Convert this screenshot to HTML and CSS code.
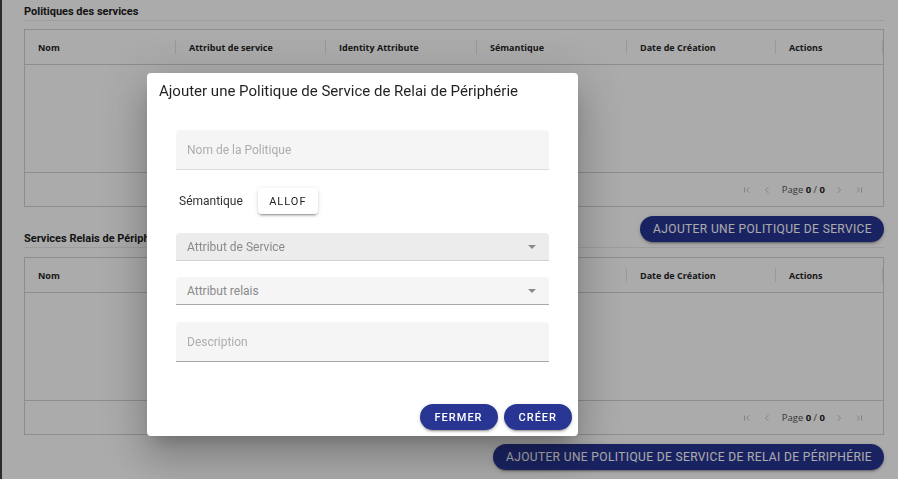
FILE: index.html
```html
<!DOCTYPE html>
<html lang="fr">
<head>
<meta charset="utf-8">
<title>Politiques des services</title>
<link rel="stylesheet" href="styles.css">
</head>
<body>
<div class="layout">
  <aside class="rail"></aside>
  <main class="content">
    <div class="section-head">
      <h2 class="section-title">Politiques des services</h2>
    </div>
    <div class="data-table">
      <div class="thead">
        <div class="th">Nom</div>
        <div class="th">Attribut de service</div>
        <div class="th">Identity Attribute</div>
        <div class="th">Sémantique</div>
        <div class="th">Date de Création</div>
        <div class="th">Actions</div>
      </div>
      <div class="tbody"></div>
      <div class="tfoot">
        <div class="pager">
          <svg class="pg-icon" width="10" height="10" viewBox="0 0 10 10"><path d="M2.5 2.5v5M7 2.5 4.5 5 7 7.5"/></svg>
          <svg class="pg-icon" width="10" height="10" viewBox="0 0 10 10"><path d="M6.5 2 3.5 5l3 3"/></svg>
          <span class="pg-text">Page <b>0</b> / <b>0</b></span>
          <svg class="pg-icon" width="10" height="10" viewBox="0 0 10 10"><path d="M3.5 2 6.5 5l-3 3"/></svg>
          <svg class="pg-icon" width="10" height="10" viewBox="0 0 10 10"><path d="M3 2.5 5.5 5 3 7.5M7.5 2.5v5"/></svg>
        </div>
      </div>
    </div>

    <div class="section-head">
      <h2 class="section-title">Services Relais de Périphérie</h2>
      <button class="btn-primary btn-page">Ajouter une politique de service</button>
    </div>
    <div class="data-table second">
      <div class="thead">
        <div class="th">Nom</div>
        <div class="th">Attribut de service</div>
        <div class="th">Attribut relais</div>
        <div class="th">Sémantique</div>
        <div class="th">Date de Création</div>
        <div class="th">Actions</div>
      </div>
      <div class="tbody"></div>
      <div class="tfoot">
        <div class="pager">
          <svg class="pg-icon" width="10" height="10" viewBox="0 0 10 10"><path d="M2.5 2.5v5M7 2.5 4.5 5 7 7.5"/></svg>
          <svg class="pg-icon" width="10" height="10" viewBox="0 0 10 10"><path d="M6.5 2 3.5 5l3 3"/></svg>
          <span class="pg-text">Page <b>0</b> / <b>0</b></span>
          <svg class="pg-icon" width="10" height="10" viewBox="0 0 10 10"><path d="M3.5 2 6.5 5l-3 3"/></svg>
          <svg class="pg-icon" width="10" height="10" viewBox="0 0 10 10"><path d="M3 2.5 5.5 5 3 7.5M7.5 2.5v5"/></svg>
        </div>
      </div>
    </div>
    <div class="page-actions">
      <button class="btn-primary btn-page">Ajouter une politique de service de relai de périphérie</button>
    </div>
  </main>
</div>

<div class="backdrop"></div>
<div class="dialog" role="dialog">
  <h1 class="dialog-title">Ajouter une Politique de Service de Relai de Périphérie</h1>
  <div class="form">
    <div class="field field-tall"><span class="ph">Nom de la Politique</span></div>
    <div class="semantic-row">
      <span class="semantic-label">Sémantique</span>
      <button class="btn-toggle">ALLOF</button>
    </div>
    <div class="field field-select field-hover"><span class="ph ph-dark">Attribut de Service</span>
      <svg class="caret" width="8" height="4" viewBox="0 0 8 4"><path d="M0 0h8L4 4z"/></svg>
    </div>
    <div class="field field-select field-strong"><span class="ph ph-dark">Attribut relais</span>
      <svg class="caret" width="8" height="4" viewBox="0 0 8 4"><path d="M0 0h8L4 4z"/></svg>
    </div>
    <div class="field field-tall field-strong"><span class="ph">Description</span></div>
  </div>
  <div class="dialog-actions">
    <button class="btn-primary btn-dialog">Fermer</button>
    <button class="btn-primary btn-dialog">Créer</button>
  </div>
</div>
</body>
</html>
```

FILE: styles.css
```css
* { box-sizing: border-box; }

body {
  margin: 0;
  width: 898px;
  height: 479px;
  overflow: hidden;
  background: #ffffff;
  font-family: Roboto, "Liberation Sans", sans-serif;
}

.layout {
  display: flex;
  height: 479px;
}

.rail {
  width: 2px;
  flex: none;
  background: #414141;
}

.content {
  flex: 1;
  padding: 0 14px 0 22px;
}

.section-head {
  display: flex;
  justify-content: space-between;
  align-items: flex-end;
  border-bottom: 1px solid #ebebeb;
}

.section-title {
  margin: 0;
  padding: 5px 0 1px;
  font: 700 11px/14px Roboto, "Liberation Sans", sans-serif;
  color: #1c1c1c;
}

.data-table {
  margin-top: 8px;
  border: 1px solid #d3d3d3;
}
.data-table.second { margin-top: 9px; }

.thead {
  display: grid;
  grid-template-columns: 151px 150px 151px 150px 149px 1fr;
  height: 35px;
  border-bottom: 1px solid #d3d3d3;
}

.th {
  display: flex;
  align-items: center;
  padding-left: 13px;
  font: 700 9px "Open Sans", "Liberation Sans", sans-serif;
  color: #262626;
  background: linear-gradient(#e6e6e6, #e6e6e6) right center / 1px 14px no-repeat;
}

.tbody { height: 107px; }

.tfoot {
  height: 34px;
  border-top: 1px solid #d3d3d3;
  display: flex;
  justify-content: flex-end;
  align-items: center;
  padding-right: 19px;
}

.pager {
  display: flex;
  align-items: center;
}

.pg-icon {
  fill: none;
  stroke: #c4c4c4;
  stroke-width: 1;
  margin-left: 10px;
}
.pg-icon:first-child { margin-left: 0; }

.pg-text {
  margin: 0 -1px 0 10px;
  font: 400 9.5px "Open Sans", "Liberation Sans", sans-serif;
  color: #555;
}
.pg-text b { color: #222; font-weight: 700; }

.btn-primary {
  border: none;
  background: #283593;
  color: #ffffff;
  text-transform: uppercase;
  font-family: Roboto, "Liberation Sans", sans-serif;
  font-weight: 500;
  cursor: pointer;
  box-shadow: 0 3px 1px -2px rgba(0,0,0,.2), 0 2px 2px 0 rgba(0,0,0,.14), 0 1px 5px 0 rgba(0,0,0,.12);
}

.btn-page {
  height: 26px;
  padding: 0 12px 0 13px;
  border-radius: 13px;
  font-size: 12px;
  font-weight: 400;
  letter-spacing: 0.37px;
  margin: 9px 0 5px;
}

.page-actions {
  display: flex;
  justify-content: flex-end;
  margin-top: 9px;
}
.page-actions .btn-page { margin: 0; }

.backdrop {
  position: fixed;
  inset: 0;
  background: rgba(0,0,0,.33);
}

.dialog {
  position: absolute;
  left: 147px;
  top: 73px;
  width: 431px;
  background: #ffffff;
  border-radius: 4px;
  box-shadow: 0 11px 15px -7px rgba(0,0,0,.2), 0 24px 38px 3px rgba(0,0,0,.14), 0 9px 46px 8px rgba(0,0,0,.12);
}

.dialog-title {
  margin: 0;
  padding: 7px 12px 0;
  font: 400 15px/22px Roboto, "Liberation Sans", sans-serif;
  color: rgba(0,0,0,.87);
}

.form {
  display: flex;
  flex-direction: column;
  margin-top: 28px;
  padding: 0 29px;
}

.field {
  display: flex;
  align-items: center;
  justify-content: space-between;
  padding: 0 13px 0 11px;
  background: #f5f5f5;
  border-bottom: 1px solid #dcdcdc;
  border-radius: 4px 4px 0 0;
}

.field-tall { height: 40px; }
.field-select { height: 28px; margin-top: 16px; }
.field-hover { background: #ececec; border-bottom-color: #d2d2d2; margin-top: 19px; }
.field-strong { border-bottom-color: #a8a8a8; }
.field-tall.field-strong { margin-top: 17px; }

.ph {
  font-size: 12px;
  color: #adadad;
}
.ph-dark { color: #8a8a8a; }

.caret { fill: #8a8a8a; }

.semantic-row {
  display: flex;
  align-items: center;
  margin-top: 18px;
  height: 26px;
}

.semantic-label {
  margin-left: 3px;
  font-size: 12px;
  color: #333;
}

.btn-toggle {
  margin-left: 15px;
  width: 60px;
  height: 26px;
  border: none;
  border-radius: 4px;
  background: #ffffff;
  font: 400 11px Roboto, "Liberation Sans", sans-serif;
  letter-spacing: 1px;
  color: #222;
  box-shadow: 0 3px 1px -2px rgba(0,0,0,.2), 0 2px 2px 0 rgba(0,0,0,.14), 0 1px 5px 0 rgba(0,0,0,.12);
}

.dialog-actions {
  display: flex;
  justify-content: flex-end;
  gap: 6px;
  margin-top: 42px;
  padding: 0 6px 6px;
}

.btn-dialog {
  height: 26px;
  padding: 0 15px;
  border-radius: 13px;
  font-size: 11px;
  letter-spacing: 1px;
}
```
